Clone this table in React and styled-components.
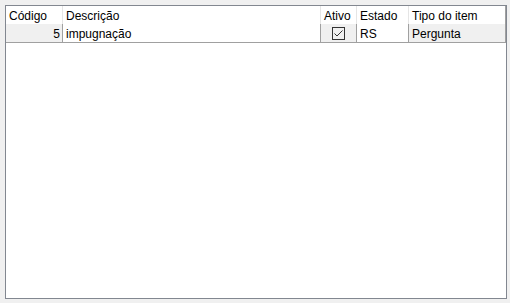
import React from "react";
import styled, { createGlobalStyle } from "styled-components";

const GlobalStyle = createGlobalStyle`
  html, body {
    margin: 0;
    padding: 0;
    background: #f0f0f0;
    font-family: "Liberation Sans", "Noto Sans", Arial, sans-serif;
  }
`;

const Page = styled.div`
  width: 510px;
  height: 303px;
  padding: 5px 3px 4px 5px;
  box-sizing: border-box;
  background: #f0f0f0;
`;

const Grid = styled.div`
  width: 502px;
  height: 294px;
  box-sizing: border-box;
  border: 1px solid #828790;
  background: #ffffff;
  display: grid;
  grid-template-columns: 57px 258px 36px 52px 97px;
  grid-template-rows: 18px 19px;
  align-content: start;
  font-size: 12px;
  color: #000;
`;

const HeaderCell = styled.div`
  box-sizing: border-box;
  display: flex;
  align-items: center;
  padding: 2px 2px 0 3px;
  background: #ffffff;
  border-right: 1px solid ${(p) => (p.$last ? "#a0a0a0" : "#e5e5e5")};
  white-space: nowrap;
  overflow: hidden;
`;

const Cell = styled.div`
  box-sizing: border-box;
  display: flex;
  align-items: center;
  justify-content: ${(p) => p.$align || "flex-start"};
  padding: ${(p) => (p.$align === "center" ? "1px 0 0 0" : "2px 2px 0 3px")};
  background: ${(p) => (p.$readOnly ? "#f0f0f0" : "#ffffff")};
  border-right: 1px solid #a0a0a0;
  border-bottom: 1px solid #a0a0a0;
  white-space: nowrap;
  overflow: hidden;
`;

const Check = ({ checked }) => (
  <svg width="13" height="13" viewBox="0 0 13 13">
    <rect x="0.5" y="0.5" width="12" height="12" fill="#f0f0f0" stroke="#333333" />
    {checked && (
      <polyline
        points="2.5,6.5 5,9 10.5,3.5"
        fill="none"
        stroke="#333333"
        strokeWidth="1"
      />
    )}
  </svg>
);

const columns = ["Código", "Descrição", "Ativo", "Estado", "Tipo do item"];

const rows = [
  { codigo: 5, descricao: "impugnação", ativo: true, estado: "RS", tipo: "Pergunta" },
];

export default function App() {
  return (
    <>
      <GlobalStyle />
      <Page>
        <Grid>
          {columns.map((c, i) => (
            <HeaderCell key={c} $last={i === columns.length - 1}>
              {c}
            </HeaderCell>
          ))}
          {rows.map((r) => (
            <React.Fragment key={r.codigo}>
              <Cell $readOnly $align="flex-end">{r.codigo}</Cell>
              <Cell>{r.descricao}</Cell>
              <Cell $readOnly $align="center">
                <Check checked={r.ativo} />
              </Cell>
              <Cell>{r.estado}</Cell>
              <Cell $readOnly>{r.tipo}</Cell>
            </React.Fragment>
          ))}
        </Grid>
      </Page>
    </>
  );
}
